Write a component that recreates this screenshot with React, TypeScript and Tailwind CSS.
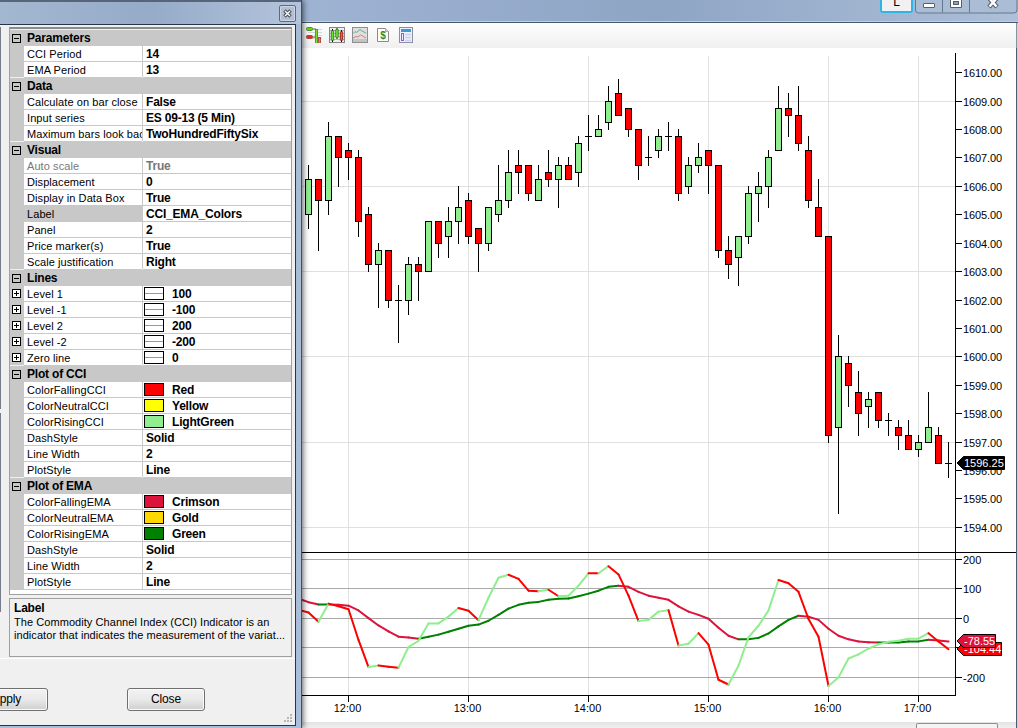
import type { ReactNode } from "react";

type Row = {
  name: string;
  value: string;
  swatch?: string;
  line?: boolean;
  muted?: boolean;
  selected?: boolean;
};

type Group = { title: string; rows: Row[] };

const groups: Group[] = [
  {
    title: "Parameters",
    rows: [
      { name: "CCI Period", value: "14" },
      { name: "EMA Period", value: "13" },
    ],
  },
  {
    title: "Data",
    rows: [
      { name: "Calculate on bar close", value: "False" },
      { name: "Input series", value: "ES 09-13 (5 Min)" },
      { name: "Maximum bars look back", value: "TwoHundredFiftySix" },
    ],
  },
  {
    title: "Visual",
    rows: [
      { name: "Auto scale", value: "True", muted: true },
      { name: "Displacement", value: "0" },
      { name: "Display in Data Box", value: "True" },
      { name: "Label", value: "CCI_EMA_Colors", selected: true },
      { name: "Panel", value: "2" },
      { name: "Price marker(s)", value: "True" },
      { name: "Scale justification", value: "Right" },
    ],
  },
  {
    title: "Lines",
    rows: [
      { name: "Level 1", value: "100", line: true },
      { name: "Level -1", value: "-100", line: true },
      { name: "Level 2", value: "200", line: true },
      { name: "Level -2", value: "-200", line: true },
      { name: "Zero line", value: "0", line: true },
    ],
  },
  {
    title: "Plot of CCI",
    rows: [
      { name: "ColorFallingCCI", value: "Red", swatch: "bg-[#ff0000]" },
      { name: "ColorNeutralCCI", value: "Yellow", swatch: "bg-[#ffff00]" },
      { name: "ColorRisingCCI", value: "LightGreen", swatch: "bg-[#90ee90]" },
      { name: "DashStyle", value: "Solid" },
      { name: "Line Width", value: "2" },
      { name: "PlotStyle", value: "Line" },
    ],
  },
  {
    title: "Plot of EMA",
    rows: [
      { name: "ColorFallingEMA", value: "Crimson", swatch: "bg-[#dc143c]" },
      { name: "ColorNeutralEMA", value: "Gold", swatch: "bg-[#ffd700]" },
      { name: "ColorRisingEMA", value: "Green", swatch: "bg-[#008000]" },
      { name: "DashStyle", value: "Solid" },
      { name: "Line Width", value: "2" },
      { name: "PlotStyle", value: "Line" },
    ],
  },
];

// [open, high, low, close], one bar every five minutes
const bars: [number, number, number, number][] = [
  [1605, 1606.75, 1604.5, 1606.25],
  [1606.25, 1606.25, 1603.75, 1605.5],
  [1605.5, 1608.25, 1605, 1607.75],
  [1607.75, 1607.75, 1606, 1607],
  [1607.25, 1607.5, 1606.25, 1607],
  [1607, 1607.25, 1604.25, 1604.75],
  [1605, 1605.25, 1603, 1603.25],
  [1603.25, 1604, 1601.75, 1603.75],
  [1603.75, 1603.75, 1601.75, 1602],
  [1602, 1602.5, 1600.5, 1602],
  [1602, 1603.5, 1601.5, 1603.25],
  [1603.25, 1603.5, 1602, 1603],
  [1603, 1604.75, 1603, 1604.75],
  [1604.75, 1604.75, 1603.5, 1604],
  [1604.25, 1605.25, 1603.5, 1604.75],
  [1604.75, 1606, 1604, 1605.25],
  [1605.5, 1605.75, 1604, 1604.25],
  [1604.5, 1604.5, 1603, 1604],
  [1604, 1605.25, 1603.75, 1605.25],
  [1605, 1606.75, 1604.75, 1605.5],
  [1605.5, 1607.25, 1605.25, 1606.5],
  [1606.75, 1607.25, 1605.75, 1606.5],
  [1606.75, 1606.75, 1605.5, 1605.75],
  [1605.5, 1606.75, 1605.5, 1606.25],
  [1606.5, 1607.25, 1606, 1606.25],
  [1606.25, 1607, 1605.25, 1606.75],
  [1606.75, 1607, 1606.25, 1606.25],
  [1606.5, 1607.75, 1606, 1607.5],
  [1607.75, 1608.5, 1607.25, 1607.75],
  [1607.75, 1608.5, 1607.75, 1608],
  [1608.25, 1609.5, 1608, 1609],
  [1609.25, 1609.75, 1608.5, 1608.5],
  [1608.75, 1608.75, 1607.75, 1608],
  [1608, 1608, 1606.25, 1606.75],
  [1607, 1607.75, 1606.75, 1607],
  [1607.25, 1608, 1607, 1607.75],
  [1607.75, 1608.25, 1607.25, 1607.75],
  [1607.75, 1608, 1605.5, 1605.75],
  [1606, 1607, 1605.75, 1606.75],
  [1606.75, 1607.5, 1606.5, 1607],
  [1607.25, 1607.25, 1605.75, 1606.75],
  [1606.75, 1606.75, 1603.5, 1603.75],
  [1603.75, 1604.25, 1602.75, 1603.25],
  [1603.5, 1604.25, 1602.5, 1604.25],
  [1604.25, 1606, 1604, 1605.75],
  [1605.75, 1606.5, 1604.75, 1606],
  [1606, 1607.25, 1605.25, 1607],
  [1607.25, 1609.5, 1607.25, 1608.75],
  [1608.75, 1609.25, 1607.75, 1608.5],
  [1608.5, 1609.5, 1607.25, 1607.5],
  [1607.25, 1607.75, 1605.25, 1605.5],
  [1605.25, 1606.25, 1604.25, 1604.25],
  [1604.25, 1604.25, 1597, 1597.25],
  [1597.5, 1600.75, 1594.5, 1600],
  [1599.75, 1600, 1598.25, 1599],
  [1598.75, 1599.5, 1597.25, 1598],
  [1598.25, 1598.75, 1597.5, 1598.5],
  [1598.75, 1598.75, 1597.5, 1597.75],
  [1597.75, 1598, 1597.25, 1597.75],
  [1597.5, 1597.75, 1596.75, 1597.25],
  [1597.25, 1597.75, 1596.75, 1596.75],
  [1596.75, 1597.25, 1596.5, 1597],
  [1597, 1598.75, 1597, 1597.5],
  [1597.25, 1597.5, 1596.25, 1596.25],
  [1596.25, 1597, 1595.75, 1596.25],
];

// both series start one bar before the first visible candle
const cci = [
  29, 20, -11, 50, 41, 31, -73, -165, -160, -164, -167, -97, -76, -17, -16.9, 6, 35, 26, -6, 70, 138,
  148, 134, 94, 92, 97, 75, 77, 111, 153, 152.9, 177, 149, 77, -9, -5, 23, 28, -92, -86, -50, -89,
  -208, -224, -160, -64, -25, 27, 130, 119, 90, -2, -62, -229, -200, -136, -122, -102, -88, -79, -76,
  -69, -68.9, -50, -78, -104.44,
];

const ema = [
  67, 55, 47, 47.1, 46, 43, 27, 1, -24, -44, -62, -65, -69, -62, -55, -45, -35, -25, -21, -8, 12, 33,
  46, 53, 56, 63, 67, 67.5, 75, 84, 94, 107, 111, 107, 90, 77, 70, 63, 41, 23, 12, -1, -32, -59, -71,
  -70.9, -66, -51, -27, -5, 9, 6, -5, -35, -59, -71, -78, -81, -81.5, -81.4, -81.3, -78, -77.9, -72,
  -75, -78.55,
];

const times = [
  { label: "12:00", x: 348 },
  { label: "13:00", x: 468 },
  { label: "14:00", x: 588 },
  { label: "15:00", x: 708 },
  { label: "16:00", x: 828 },
  { label: "17:00", x: 918 },
];

const prices = Array.from({ length: 17 }, (_, i) => 1610 - i);
const gridPrices = [1609, 1606, 1603, 1600, 1597, 1594];

const levels = [
  { value: "200", y: 559 },
  { value: "100", y: 588 },
  { value: "0", y: 618 },
  { value: "", y: 647 },
  { value: "-200", y: 677 },
];

const priceY = (p: number) => Math.floor(101.1 + (1609 - p) * 28.42);
const cciY = (v: number) => 618.4 - v * 0.295;

function Candle({ bar, x }: { bar: [number, number, number, number]; x: number }) {
  const [open, high, low, close] = bar;
  const top = priceY(Math.max(open, close));
  const bottom = priceY(Math.min(open, close));
  return (
    <g>
      <rect x={x} y={priceY(high)} width={1} height={priceY(low) - priceY(high) + 1} fill="#000" />
      {open === close ? (
        <rect x={x - 3} y={top} width={7} height={1} fill="#000" />
      ) : (
        <rect
          x={x - 2.5}
          y={top + 0.5}
          width={6}
          height={bottom - top}
          fill={close > open ? "#90ee90" : "#ff0000"}
          stroke="#000"
        />
      )}
    </g>
  );
}

function Series({ data, up, down }: { data: number[]; up: string; down: string }) {
  return (
    <g strokeWidth={2} strokeLinecap="round">
      {data.slice(1).map((v, i) => (
        <line
          key={i}
          x1={298.5 + i * 10}
          y1={cciY(data[i])}
          x2={308.5 + i * 10}
          y2={cciY(v)}
          stroke={v > data[i] ? up : down}
        />
      ))}
    </g>
  );
}

function Marker({ y, right, fill, text }: { y: number; right: number; fill: string; text: string }) {
  return (
    <g>
      <path
        d={`M957 ${y}L963.5 ${y - 6.5}H${right}V${y + 6.5}H963.5Z`}
        fill={fill}
        stroke="#000"
      />
      <text x={964} y={y + 4} fill="#fff">
        {text}
      </text>
    </g>
  );
}

function Chart() {
  return (
    <svg
      className="block shrink-0 bg-white font-['Liberation_Sans',Arial,sans-serif] text-[11px]"
      width={714}
      height={674}
      viewBox="302 48 714 674"
    >
      <g fill="#e0e0e0">
        {times.map((t) => (
          <rect key={t.label} x={t.x} y={56} width={1} height={639} />
        ))}
        {gridPrices.map((p) => (
          <rect key={p} x={302} y={priceY(p)} width={653} height={1} />
        ))}
      </g>
      <g fill="#a9a9a9">
        {levels.map((l) => (
          <rect key={l.y} x={302} y={l.y} width={653} height={1} />
        ))}
      </g>

      {bars.map((bar, i) => (
        <Candle key={i} bar={bar} x={308 + i * 10} />
      ))}
      <Series data={ema} up="#008000" down="#dc143c" />
      <Series data={cci} up="#90ee90" down="#ff0000" />

      <g fill="#000">
        <rect x={955} y={53} width={1} height={643} />
        <rect x={302} y={552} width={714} height={1} />
        <rect x={302} y={695} width={654} height={1} />
        {prices.map((p) => (
          <g key={p}>
            <rect x={956} y={priceY(p)} width={6} height={1} />
            <text x={963} y={priceY(p) + 5} textLength={39}>
              {p.toFixed(2)}
            </text>
          </g>
        ))}
        {levels.map((l) => (
          <g key={l.y}>
            <rect x={956} y={l.y} width={6} height={1} />
            <text x={963} y={l.y + 5}>
              {l.value}
            </text>
          </g>
        ))}
        {times.map((t) => (
          <g key={t.label}>
            <rect x={t.x} y={696} width={1} height={6} />
            <text x={t.x - 0.5} y={712} textAnchor="middle">
              {t.label}
            </text>
          </g>
        ))}
      </g>

      <Marker y={463} right={1004.5} fill="#000" text="1596.25" />
      <Marker y={649} right={1001.5} fill="#ff0000" text="-104.44" />
      <Marker y={641} right={995.5} fill="#dc143c" text="-78.55" />
    </svg>
  );
}

function Expander({ open }: { open?: boolean }) {
  return (
    <svg width={9} height={9} viewBox="0 0 9 9" className="block">
      <rect x={0.5} y={0.5} width={8} height={8} fill={open ? "none" : "#fff"} stroke="#000" />
      <path d={open ? "M2 4.5H7" : "M2 4.5H7M4.5 2V7"} stroke="#000" />
    </svg>
  );
}

function PropertyRow({ row }: { row: Row }) {
  const boxed = row.swatch || row.line;
  return (
    <div className={`flex h-4 ${row.muted ? "text-[#787878]" : "text-black"}`}>
      <div className="w-[14px] shrink-0 pl-[2px] pt-[3px]">{row.line && <Expander />}</div>
      <div
        className={`w-[118px] shrink-0 overflow-hidden whitespace-nowrap border-b border-[#c8c8c8] pl-[3px] leading-4 tracking-[0.08px] ${
          row.selected ? "bg-[#c8c8c8]" : "bg-white"
        }`}
      >
        {row.name}
      </div>
      <div className="ml-px flex flex-1 items-center whitespace-nowrap border-b border-[#c8c8c8] bg-white text-xs font-bold leading-4 tracking-[-0.2px]">
        {boxed ? (
          <>
            <span
              className={`ml-px flex h-[13px] w-5 items-center border border-black ${row.swatch ?? "bg-white"}`}
            >
              {row.line && <span className="h-px w-full bg-[#999]" />}
            </span>
            <span className="ml-2">{row.value}</span>
          </>
        ) : (
          <span className="ml-[3px]">{row.value}</span>
        )}
      </div>
    </div>
  );
}

function PropertyGrid() {
  return (
    <div className="ml-[9px] h-[568px] w-[283px] border border-t-2 border-[#a0a0a0] border-t-[#8c8c8c] bg-white pt-px">
      <div className="bg-[#c8c8c8]">
        {groups.map((g) => (
          <section key={g.title}>
            <h3 className="flex h-4 items-center pl-[2px] text-xs font-bold tracking-[-0.2px] shadow-[0_-1px_0_#f0f0f0]">
              <Expander open />
              <span className="ml-[6px]">{g.title}</span>
            </h3>
            {g.rows.map((r) => (
              <PropertyRow key={r.name} row={r} />
            ))}
          </section>
        ))}
      </div>
    </div>
  );
}

function DialogButton({ children, className }: { children: ReactNode; className: string }) {
  return (
    <button
      className={`h-[23px] rounded-[3px] border border-[#707070] bg-linear-to-b from-[#f3f3f3] via-[#e9e9e9] to-[#cfcfcf] pb-[2px] text-xs leading-[18px] tracking-[-0.1px] shadow-[inset_0_0_0_1px_#fafafa] ${className}`}
    >
      {children}
    </button>
  );
}

function PropertiesDialog() {
  return (
    <aside className="relative z-10 flex h-[728px] w-[302px] shrink-0 flex-col border-r border-[#3d5068] bg-linear-to-b from-[#a9bbd4] to-[#a9bedb] shadow-[1px_0_6px_rgba(0,0,0,0.65)]">
      <header className="flex h-6 shrink-0 items-start justify-end border-t-2 border-t-[#56657a] bg-linear-to-r from-[#a4b7d1] via-[#95abc8] to-[#b4c4dc] pr-[5px] pt-[3px]">
        <button className="flex h-[17px] w-[17px] items-center justify-center rounded-[2px] border border-[#5c6b80] bg-[#b3c0d3] shadow-[inset_0_0_0_1px_#ccd6e4]">
          <svg width={9} height={9} viewBox="0 0 9 9">
            <path d="M1.5 1.5L7.5 7.5M7.5 1.5L1.5 7.5" stroke="#454b57" strokeWidth={3.4} />
            <path d="M2 2L7 7M7 2L2 7" stroke="#fff" strokeWidth={1.4} />
          </svg>
        </button>
      </header>
      <div className="flex h-[702px] w-[296px] flex-col border-y border-r border-[#26364a] bg-[#f0f0f0] pt-[2px]">
        <div className="flex">
          <div className="-mr-px flex h-[585px] w-px flex-col gap-1">
            <div className="h-[382px] bg-[#777c8a]" />
            <div className="flex-1 bg-[#777c8a]" />
          </div>
          <PropertyGrid />
        </div>
        <div className="-mt-[14px] ml-[9px] h-[59px] w-[283px] shrink-0 border border-[#a0a0a0] bg-[#f0f0f0] pl-1 pt-[3px]">
          <h4 className="text-xs font-bold leading-[13px] tracking-[-0.2px]">Label</h4>
          <p className="mt-px whitespace-nowrap leading-[13px] tracking-[0.06px]">
            The Commodity Channel Index (CCI) Indicator is an
            <br />
            indicator that indicates the measurement of the variat...
          </p>
        </div>
        <div className="mt-px h-px bg-white" />
        <div className="mt-[29px] flex">
          <DialogButton className="-ml-[30px] w-[78px] pr-[5px]">Apply</DialogButton>
          <DialogButton className="ml-[79px] w-[78px]">Close</DialogButton>
        </div>
        <svg width={9} height={9} viewBox="0 0 9 9" className="mr-[2px] mt-[3px] self-end" fill="#b8b8b8">
          <path d="M6 0h2v2h-2zM3 3h2v2h-2zM6 3h2v2h-2zM0 6h2v2h-2zM3 6h2v2h-2zM6 6h2v2h-2z" />
        </svg>
      </div>
    </aside>
  );
}

function Toolbar() {
  return (
    <div className="flex h-[25px] shrink-0 items-start border-r border-[#8a95a3] bg-linear-to-b from-[#fefefe] to-[#f0f0f0] pl-1 pt-1">
      <svg width={17} height={17} viewBox="0 0 17 17">
        <path d="M8 2.5h8M2 5.5h14M8 8.500h8M2 11.5h14" stroke="#d6d6d6" />
        <rect x={0.5} y={0.5} width={6} height={3} rx={1} fill="#58e000" stroke="#4f8c3a" />
        <rect x={0.5} y={8.5} width={6} height={3} rx={1} fill="#f02a20" stroke="#a04a40" />
        <path d="M7 2h3M7 10h3" stroke="#555" />
        <path d="M10.500 2v14" stroke="#4da51f" strokeWidth={3} />
        <path d="M10.500 3v13" stroke="#6ee02f" />
        <path d="M13.500 10v6" stroke="#b0524a" strokeWidth={3} />
        <path d="M13.500 11v5" stroke="#ee7a70" />
      </svg>
      <svg width={16} height={16} viewBox="0 0 16 16" className="ml-[6px]">
        <rect x={0.5} y={0.5} width={15} height={15} fill="#f0f0f0" stroke="#858585" />
        <path d="M1 3.5h14M1 6.5h14M1 9.5h14M1 12.5h14" stroke="#b5b5b5" />
        <path d="M3.5 2v13M8 1v11M12.5 3v12" stroke="#111" />
        <path d="M3.5 3.500v10M8 2.500v8" stroke="#2f7d12" strokeWidth={3.4} />
        <path d="M3.5 4v9M8 3v7" stroke="#5fe325" strokeWidth={1.8} />
        <path d="M12.5 4.500v9" stroke="#8c2a22" strokeWidth={3.4} />
        <path d="M12.5 5v8" stroke="#f0564a" strokeWidth={1.8} />
      </svg>
      <svg width={16} height={16} viewBox="0 0 16 16" className="ml-[7px]">
        <rect x={0.5} y={0.5} width={15} height={15} fill="#dfdfdf" stroke="#8e8e8e" />
        <path d="M1 12h14v3H1z" fill="#c4c4c4" />
        <path d="M1 6.5l2-2 1.5 1L8 2.500l2 1.500 4 2" fill="none" stroke="#57b18b" />
        <path d="M1 11l3-1.500 2 .5 2.500-2 2 1 3.500 2" fill="none" stroke="#e27a76" />
      </svg>
      <svg width={12} height={15} viewBox="0 0 12 15" className="ml-[9px] mt-px">
        <path d="M.5.5H8.500L11.500 3.500V13.500H.5z" fill="#fff" stroke="#8b8b8b" />
        <path d="M8.500.5V3.500h3" fill="#ddd" stroke="#aaa" />
        <text
          x={6}
          y={11}
          textAnchor="middle"
          fill="#2c8c24"
          className="font-['Liberation_Sans',Arial,sans-serif] text-[10px] font-bold"
        >
          $
        </text>
      </svg>
      <svg width={14} height={16} viewBox="0 0 14 16" className="ml-[10px]">
        <rect x={0.5} y={0.5} width={13} height={15} fill="#eef1fc" stroke="#8b8fa0" />
        <path d="M2 3.500h10" stroke="#3d98d3" strokeWidth={3} />
        <rect x={2.5} y={6.5} width={2} height={7} fill="#f2e9ff" stroke="#9455f5" />
        <path d="M6 7.500h6M6 10.500h6M6 13.500h6" stroke="#c9d0ea" strokeWidth={1.500} />
      </svg>
    </div>
  );
}

function WindowTitleBar() {
  return (
    <header className="flex h-[23px] shrink-0 items-start justify-end border-b border-[#46586d] bg-linear-to-r from-[#9fb3d3] via-[#8ea5c4] to-[#adbfd9] shadow-[inset_0_-1px_0_#c0cfe2]">
      <div className="h-[13px] w-[33px] overflow-hidden rounded-b-[3px] border-2 border-t-0 border-[#2bb6e8] bg-[#f1f1f1] text-center text-xs leading-[5px]">
        L
      </div>
      <svg width={103} height={14} viewBox="0 0 103 14" className="ml-[2px]">
        <path d="M.5 0V10q0 3 3 3H99q3 0 3-3V0" fill="#abbcd5" stroke="#65778f" />
        <path d="M27.500 0V12.500M54.500 0V12.500" stroke="#65778f" />
        <rect x={8.5} y={3.5} width={11} height={4} rx={0.5} fill="#fff" stroke="#555e6c" />
        <path d="M35.500 -1H46.500V7.500H35.500z" fill="#fff" stroke="#555e6c" />
        <rect x={38.5} y={1.500} width={5} height={3} fill="#8ca0ba" stroke="#555e6c" />
        <path d="M74 -2L82 7M82 -2L74 7" stroke="#555e6c" strokeWidth={4.500} />
        <path d="M74.500 -1.500L81.500 6.500M81.500 -1.500L74.500 6.500" stroke="#fff" strokeWidth={2.500} />
      </svg>
    </header>
  );
}

export default function App() {
  return (
    <div className="flex h-[728px] w-[1018px] overflow-hidden bg-[#f0f0f0] font-['Liberation_Sans',Arial,sans-serif] text-[11px] text-black">
      <PropertiesDialog />
      <main className="flex w-[716px] flex-col">
        <WindowTitleBar />
        <div className="flex h-[705px] flex-col border-r border-[#c3d1e3]">
          <Toolbar />
          <div className="border-r border-[#4c5d72]">
            <Chart />
            <footer className="flex h-[6px] justify-end bg-linear-to-b from-[#e4e4e4] to-[#f0f0f0] pr-[18px] pt-px">
              <div className="h-[5px] w-[82px] rounded-t-[2px] border border-b-0 border-[#8e8e8e] bg-[#f4f4f4]" />
            </footer>
          </div>
        </div>
      </main>
    </div>
  );
}
